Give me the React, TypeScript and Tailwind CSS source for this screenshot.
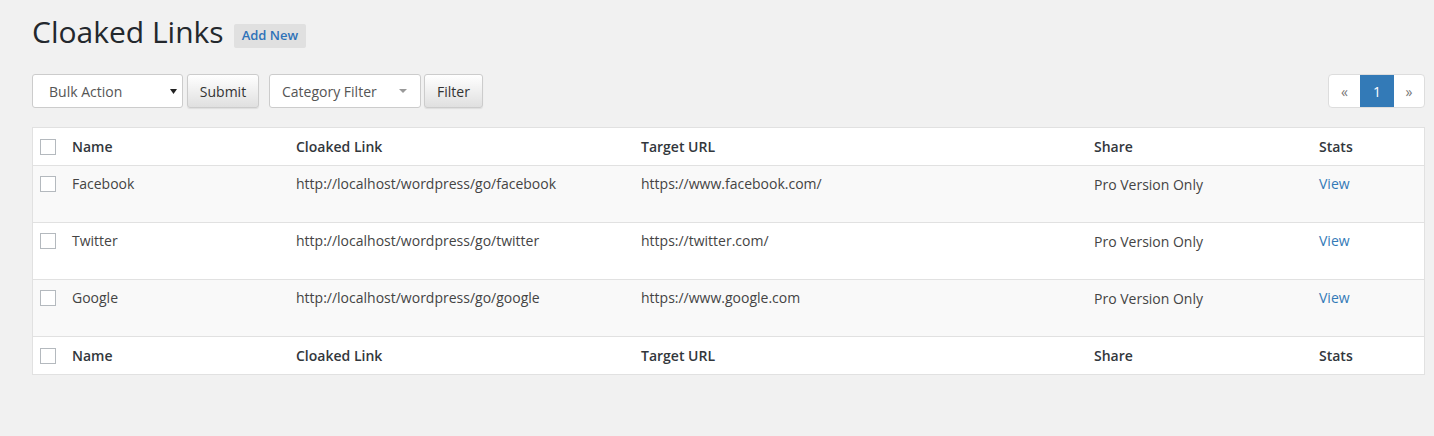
import React from 'react';

const rows = [
  { name: 'Facebook', cloaked: 'http://localhost/wordpress/go/facebook', target: 'https://www.facebook.com/' },
  { name: 'Twitter', cloaked: 'http://localhost/wordpress/go/twitter', target: 'https://twitter.com/' },
  { name: 'Google', cloaked: 'http://localhost/wordpress/go/google', target: 'https://www.google.com' },
];

const cols = 'grid grid-cols-[29px_224px_345px_453px_225px_115px]';

function Checkbox() {
  return <span className="block w-4 h-4 bg-white border border-[#b4b9be]" />;
}

function HeadRow({ footer }: { footer?: boolean }) {
  return (
    <div
      className={`${cols} items-center bg-white text-[14px] font-semibold text-[#32373c] ${
        footer ? 'h-[37px]' : 'h-[38px] border-b border-[#e1e1e1]'
      }`}
    >
      <div className="pl-[7px]">
        <Checkbox />
      </div>
      <div className="pl-[10px]">Name</div>
      <div className="pl-[10px]">Cloaked Link</div>
      <div className="pl-[10px]">Target URL</div>
      <div className="pl-[10px]">Share</div>
      <div className="pl-[10px]">Stats</div>
    </div>
  );
}

export default function App() {
  return (
    <div className="min-h-[436px] bg-[#f1f1f1] px-8 pt-3 font-['Open_Sans',sans-serif] text-[14px] text-[#444]">
      <div className="flex items-center">
        <h1 className="text-[30px] leading-[40px] font-normal text-[#23282d]">Cloaked Links</h1>
        <a className="ml-[10px] mt-2 h-6 px-2 flex items-center rounded-[2px] bg-[#e0e0e0] text-[13px] font-semibold text-[#2e72b8]">
          Add New
        </a>
      </div>

      <div className="mt-[22px] w-[1393px] flex items-center h-[34px]">
        <div className="w-[151px] h-[34px] flex items-center justify-between pl-4 pr-[5px] bg-white border border-[#ccc] rounded-[3px] text-[#555]">
          <span>Bulk Action</span>
          <svg width="7" height="5" viewBox="0 0 7 5">
            <path d="M0 0h7L3.5 5z" fill="#222" />
          </svg>
        </div>
        <button className="ml-[4px] w-[72px] h-[34px] border border-[#ccc] rounded-[3px] bg-gradient-to-b from-white to-[#e0e0e0] text-[#333] shadow-[0_1px_1px_rgba(0,0,0,0.08)]">
          Submit
        </button>
        <div className="ml-[10px] w-[152px] h-[34px] flex items-center justify-between pl-3 pr-[13px] bg-white border border-[#ccc] rounded-[3px] text-[#555]">
          <span>Category Filter</span>
          <svg width="8" height="4" viewBox="0 0 8 4">
            <path d="M0 0h8L4 4z" fill="#999" />
          </svg>
        </div>
        <button className="ml-[3px] w-[59px] h-[34px] border border-[#ccc] rounded-[3px] bg-gradient-to-b from-white to-[#e0e0e0] text-[#333] shadow-[0_1px_1px_rgba(0,0,0,0.08)]">
          Filter
        </button>

        <div className="ml-auto flex h-[34px] border border-[#ddd] rounded-[4px] bg-white overflow-hidden">
          <span className="w-[31px] flex items-center justify-center text-[#777]">«</span>
          <span className="w-[34px] flex items-center justify-center bg-[#337ab7] text-white">1</span>
          <span className="w-[30px] flex items-center justify-center text-[#777]">»</span>
        </div>
      </div>

      <div className="mt-[19px] w-[1393px] border border-[#e1e1e1] bg-white">
        <HeadRow />
        {rows.map((r, i) => (
          <div
            key={r.name}
            className={`${cols} h-[57px] border-b border-[#e1e1e1] leading-5 ${i % 2 === 0 ? 'bg-[#f9f9f9]' : 'bg-white'}`}
          >
            <div className="pl-[7px] pt-[10px]">
              <Checkbox />
            </div>
            <div className="pl-[10px] pt-2">{r.name}</div>
            <div className="pl-[10px] pt-2">{r.cloaked}</div>
            <div className="pl-[10px] pt-2">{r.target}</div>
            <div className="pl-[10px] pt-[9px]">Pro Version Only</div>
            <div className="pl-[10px] pt-2">
              <a className="text-[#337ab7]">View</a>
            </div>
          </div>
        ))}
        <HeadRow footer />
      </div>
    </div>
  );
}
